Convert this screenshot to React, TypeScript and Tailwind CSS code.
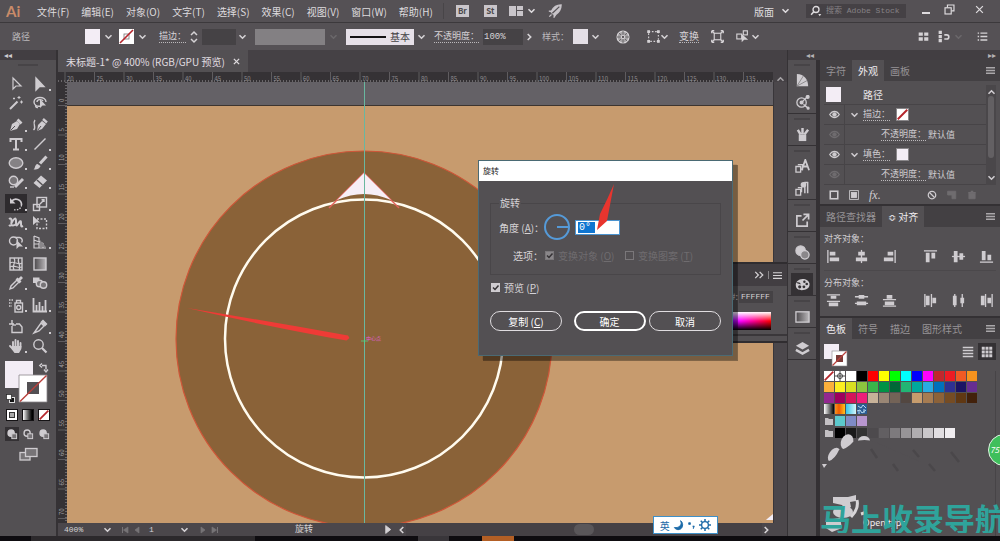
import type { ReactNode } from "react";

const menus = ["文件(F)", "编辑(E)", "对象(O)", "文字(T)", "选择(S)", "效果(C)", "视图(V)", "窗口(W)", "帮助(H)"];

const swatchRows = [
  ["none", "reg", "#ffffff", "#000000", "#ff0000", "#ffff00", "#00ff00", "#00ffff", "#0000ff", "#ff00ff", "#c1272d", "#ed1c24", "#f15a24", "#f7931e"],
  ["#fbb03b", "#fcee21", "#d9e021", "#8cc63f", "#39b54a", "#009245", "#006837", "#22b573", "#00a99d", "#29abe2", "#0071bc", "#2e3192", "#1b1464", "#662d91"],
  ["#93278f", "#9e005d", "#d4145a", "#ed1e79", "#c7b299", "#998675", "#736357", "#534741", "#c69c6d", "#a67c52", "#8c6239", "#754c24", "#603813", "#42210b"],
  ["linear-gradient(90deg,#fff,#000)", "linear-gradient(90deg,#f7931e,#f15a00 40%,#ffc21e)", "linear-gradient(90deg,#36c5e8,#d5f6fb)", "pattern"],
  ["folder", "#5cc8cc", "#7f8bc6", "#b896cf"],
  ["folder", "#000000", "#1a1a1a", "#333333", "#4d4a4d", "#625f62", "#7d7a7d", "#979497", "#b0adb0", "#cac7ca", "#e1dee1", "#f0edf0"],
];

function Icon({ size = 16, className = "", children }: { size?: number; className?: string; children: ReactNode }) {
  return (
    <svg width={size} height={size} viewBox="0 0 16 16" className={`shrink-0 ${className}`} fill="none" stroke="currentColor" strokeWidth="1.4" aria-hidden="true">
      {children}
    </svg>
  );
}

function Chevron({ className = "" }: { className?: string }) {
  return (
    <svg width="9" height="6" viewBox="0 0 9 6" className={`shrink-0 pointer-events-none ${className}`} fill="none" stroke="currentColor" strokeWidth="1.6" aria-hidden="true">
      <path d="M1.5 1.2 4.5 4.2 7.5 1.2" />
    </svg>
  );
}

function NoneSwatch({ size = 15 }: { size?: number }) {
  return (
    <svg width={size} height={size} viewBox="0 0 15 15" className="shrink-0" aria-hidden="true">
      <rect width="15" height="15" fill="#fff" />
      {size > 12 && <rect x="5" y="5" width="5" height="5" fill="none" stroke="#777" strokeWidth=".8" />}
      <path d="M1 14 14 1" stroke="#b5262c" strokeWidth={size > 12 ? 1.6 : 2.6} />
    </svg>
  );
}

const tools: { label: string; flyout?: boolean; active?: boolean; icon: ReactNode }[][] = [
  [
    { label: "选择工具", icon: <path d="M5 2v11l3-3h5z" strokeWidth="1.2" /> },
    { label: "直接选择工具", flyout: true, icon: <path d="M4 2v12l3.5-3.5H12z" fill="currentColor" /> },
    { label: "魔棒工具", icon: <><path d="M2 14 9.5 6.500" strokeWidth="2" /><path d="M11 1v3M9.500 2.500h3M13.500 5.500v3M12 7h3M6 2.500v2M5 3.500h2" strokeWidth="1" /></> },
    { label: "套索工具", icon: <><path d="M9 11c-4 1-7-1-7-4s3-4.500 6-4.500 6 1.500 6 4.500M4 10c-1 1 0 3 2 2.500" /><path d="M5 7c0-3 5-3 6-1" /><path d="M8 4v9l2.500-2.500H14z" fill="currentColor" stroke="none" /></> },
  ],
  [
    { label: "钢笔工具", flyout: true, icon: <><path d="M2 14 4 7l5-3 3 3-3 5z" fill="currentColor" stroke="none" /><path d="m9.500 2.500 4 4" strokeWidth="2.600" /><path d="M2.500 13.500 7 9" stroke="#535053" strokeWidth="1" /></> },
    { label: "曲率工具", icon: <><path d="m5 14 1-6 4-4 4 3-4 5z" fill="currentColor" stroke="none" /><path d="m11 2 4 3.500" strokeWidth="2.400" /><path d="M1.500 13C5 10 0 7 3 3" /><path d="M5.500 13.500 9 9" stroke="#535053" strokeWidth="1" /></> },
    { label: "文字工具", flyout: true, icon: <path d="M2.500 6V3h11v3M8 3v10.500M5 13.500h6" strokeWidth="2" /> },
    { label: "直线段工具", flyout: true, icon: <path d="M2.500 13.500 13.500 2.500" /> },
    { label: "椭圆工具", flyout: true, icon: <ellipse cx="8" cy="8" rx="6.800" ry="5.200" fill="#858285" /> },
    { label: "画笔工具", flyout: true, icon: <><path d="M14.500 1.500 8 8.500" strokeWidth="3" /><path d="M1.500 14.500c2-1 1-5 4-5.500L8.500 11c-1 3-4 3.500-7 3.500z" fill="currentColor" stroke="none" /></> },
    { label: "Shaper 工具", flyout: true, icon: <><circle cx="5.500" cy="6.500" r="4.200" fill="#777477" /><path d="m7 13 8-8" strokeWidth="3" /><path d="M2 13h4" /></> },
    { label: "橡皮擦工具", flyout: true, icon: <><path d="m1.500 9 7.500-7.500 6 5L7.500 14z" fill="currentColor" stroke="none" /><path d="m5 6 5.500 5" stroke="#535053" /></> },
  ],
  [
    { label: "旋转工具", flyout: true, active: true, icon: <><path d="M3.500 5.500A5.500 5.500 0 0 1 13.500 9" strokeWidth="1.700" /><path d="M13.500 9A5.500 5.500 0 0 1 6 13.500" strokeDasharray="1.500 1.300" /><path d="M2 2v5.500h5.500z" fill="currentColor" stroke="none" /></> },
    { label: "比例缩放工具", flyout: true, icon: <><rect x="1.500" y="8.500" width="6" height="6" /><rect x="5" y="1.500" width="9.500" height="9.500" /><path d="m8 8 4-4M9.500 3.800H12V6" /></> },
    { label: "宽度工具", flyout: true, icon: <path d="M1 4c3-2 3 3 2 5 3-6 5-7 5-3s0 6 2 3 3-4 3-1 0 4 2 3M1 11c2-2 5 1 7-2" strokeWidth="2" /> },
    { label: "自由变换工具", icon: <><rect x="5" y="4" width="9.500" height="9.500" strokeDasharray="2 1.500" /><path d="M1 1v9l3-2.500h4z" fill="currentColor" stroke="none" /></> },
    { label: "形状生成器工具", flyout: true, icon: <><circle cx="5.500" cy="7" r="4" /><path d="M7 3.500h4.500a3 3 0 0 1 2 5" /><path d="M8.500 6v9l2.500-2.500h4z" fill="currentColor" stroke="none" /></> },
    { label: "透视网格工具", flyout: true, icon: <><path d="M2 2v12h12M2 2l5 2v10M2 6l9 3.500v4.500M2 10h5" strokeWidth="1.200" /><path d="m8 6 6 7H8z" fill="#8a878a" stroke="none" /></> },
  ],
  [
    { label: "网格工具", icon: <><rect x="2" y="2" width="12" height="12" /><path d="M2 7c4-3 8 3 12 0M2 11c5-3 7 2 12 0M6 2c3 5-3 7 0 12M11 2c-3 4 3 7 0 12" strokeWidth="1.200" /></> },
    { label: "渐变工具", icon: <rect x="2" y="2" width="12" height="12" fill="url(#toolGrad)" /> },
    { label: "吸管工具", flyout: true, icon: <><path d="m2 14 1-3 6-6 2 2-6 6z" /><path d="m10 6 4-4M8.500 3.500l4 4" strokeWidth="2.800" /></> },
    { label: "混合工具", icon: <><rect x="1" y="2.500" width="6.500" height="5.500" fill="currentColor" stroke="none" /><circle cx="7.500" cy="8.500" r="3.200" fill="#777477" /><circle cx="11.500" cy="10" r="3.200" fill="#777477" /></> },
  ],
  [
    { label: "符号喷枪工具", flyout: true, icon: <><rect x="7" y="6" width="7.500" height="9" /><path d="M8.500 6V3.500h4V6" /><circle cx="10.700" cy="10.500" r="2" /><path d="M1 3h5M1 6h3M1 9h3" strokeDasharray="1.500 1" /></> },
    { label: "柱形图工具", flyout: true, icon: <path d="M1.500 1v13.500H15M4.500 14V8M7.500 14V5M10.500 14V9M13.500 14V3" strokeWidth="1.800" /> },
  ],
  [
    { label: "画板工具", icon: <><path d="M4 1v4M1 5h5" /><path d="M4 7v6.500h10V8l-2.500-3H8" /><path d="M4 6h4" /></> },
    { label: "切片工具", flyout: true, icon: <><path d="m2 14 7-10 3 3-5 5z" /><path d="m9.500 3 1.500-1.500L14.500 5 13 6.500z" fill="currentColor" /></> },
    { label: "抓手工具", flyout: true, icon: <><path d="M5 9V4M7.500 8V2M10 8V3M12.500 9V5M2 8l3 3" strokeWidth="1.900" strokeLinecap="round" /><path d="M4 8h9.400v3L11 15H6.500L3.500 11z" fill="currentColor" stroke="none" /></> },
    { label: "缩放工具", icon: <><circle cx="6.500" cy="6.500" r="4.700" /><path d="m10 10 4.500 4.500" strokeWidth="2.200" /></> },
  ],
];

function Toolbar() {
  return (
    <aside className="flex w-14 shrink-0 flex-col bg-[#535053] text-[#cfccd0]">
      <div className="h-[10px] bg-[#423e42] pl-1 text-[8px] leading-[10px]">◂◂</div>
      <div className="flex h-[14px] justify-center pt-1"><span className="h-[2px] w-5 bg-[#474447]" /></div>
      <div className="flex flex-col gap-[3px] px-1">
        {tools.map((group, i) => (
          <div key={i} className="grid grid-cols-2">
            {group.map((t) => (
              <button key={t.label} aria-label={t.label} className={`relative mx-auto flex h-[19px] w-[22px] items-center justify-center ${t.active ? "bg-[#2e2b2e]" : ""}`}>
                <Icon size={16}>{t.icon}</Icon>
                {t.flyout && <span className="absolute right-0 bottom-[2px] h-[2px] w-[2px] bg-[#cfccd0]" />}
              </button>
            ))}
          </div>
        ))}
      </div>
      <svg width="56" height="48" viewBox="0 0 56 48" className="mt-1 shrink-0" aria-hidden="true">
        <rect x="5" y="2" width="28" height="27" fill="#f3edf5" />
        <path d="M19 16h28v27H19z" fill="#fff" stroke="#8a878a" strokeWidth=".8" />
        <rect x="27" y="23" width="12" height="12" fill="#535053" />
        <path d="M20 42.500 46.500 16.500" stroke="#b9403c" strokeWidth="1.400" />
        <path d="M42 6.500h4v4M42 4.500 39.800 6.500l2.200 2M44 10.500l2 2.500 2-2.500" fill="none" stroke="#cfccd0" strokeWidth="1.400" />
        <rect x="9.500" y="38.500" width="5" height="5" fill="#111" stroke="#ddd" />
        <rect x="6.500" y="35.500" width="5" height="5" fill="#fff" stroke="#222" strokeWidth=".7" />
      </svg>
      <div className="mt-[2px] flex justify-center gap-1">
        <button aria-label="颜色" className="flex h-3 w-3 items-center justify-center border border-[#151315] bg-white"><span className="h-[6px] w-[6px] border border-[#333] bg-[#aaa]" /></button>
        <button aria-label="渐变" className="h-3 w-3 border border-[#151315] bg-linear-to-r from-white to-black" />
        <button aria-label="无" className="h-3 w-3 border border-[#151315]"><NoneSwatch size={10} /></button>
      </div>
      <div className="mt-[6px] flex justify-center gap-[2px]">
        {["正常绘图", "背面绘图", "内部绘图"].map((label, i) => (
          <button key={label} aria-label={label} className={`flex h-[14px] w-[14px] items-center justify-center ${i === 0 ? "bg-[#343134]" : ""}`}>
            <Icon size={11}><circle cx="6" cy="6" r="4.500" fill={i === 1 ? "none" : "currentColor"} strokeWidth="2" /><rect x="7" y="7" width="7" height="7" fill="#777477" /></Icon>
          </button>
        ))}
      </div>
      <button aria-label="更改屏幕模式" className="mx-auto mt-[6px]">
        <svg width="19" height="14" viewBox="0 0 19 14" fill="#777477" stroke="currentColor" strokeWidth="1.3"><rect x="1" y="5.500" width="10" height="7.500" /><rect x="6.500" y="1.500" width="11.500" height="8" /></svg>
      </button>
    </aside>
  );
}

function MenuBar() {
  return (
    <header className="flex h-[23px] shrink-0 items-center border-b border-[#3c393c] bg-[#555155] text-[10px] text-[#dedbde]">
      <span className="w-[29px] pl-[6px] font-[Lato] text-[15px] leading-none font-bold text-[#c98b69]">Ai</span>
      <nav className="flex gap-3 pl-2 whitespace-nowrap">
        {menus.map((m) => <button key={m}>{m}</button>)}
      </nav>
      <span className="ml-[10px] h-4 w-px bg-[#484548]" />
      <button className="ml-3 h-3 w-[13px] bg-[#c9c5ca] text-[8px] leading-3 font-bold text-[#4b484b]">Br</button>
      <button className="ml-[15px] h-3 w-[13px] bg-[#c9c5ca] text-[8px] leading-3 font-bold text-[#4b484b]">St</button>
      <button aria-label="排列文档" className="ml-3 flex items-center gap-1">
        <svg width="14" height="10" viewBox="0 0 14 10" fill="#c9c5ca"><path d="M0 0h7v10H0zM8 0h6v4H8zM8 5h6v5H8z" /></svg>
        <Chevron />
      </button>
      <button aria-label="GPU 性能" className="ml-3 text-[#c9c5ca]">
        <Icon size={14}><path d="M15 1C10 1 6 4 4 8H1l3 1 1 2 2 1v3l2-3c4-3 6-7 6-11z" fill="currentColor" /><path d="m4 12-2.500 2.500" /><path d="M5 10.500 13 3" stroke="#555155" /></Icon>
      </button>
      <div className="ml-auto flex items-center">
        <span className="relative flex items-center">
          <select aria-label="工作区" className="w-[38px] appearance-none bg-transparent text-[10px]"><option>版面</option></select>
          <Chevron className="absolute right-[2px]" />
        </span>
        <label className="ml-[14px] flex h-[14px] w-[100px] items-center bg-[#454145] pl-1">
          <Icon size={12}><circle cx="8" cy="6" r="4" strokeWidth="1.800" /><path d="M5 9 1.500 13" strokeWidth="2" /><path d="M11 12h4l-2 3z" fill="currentColor" stroke="none" /></Icon>
          <input aria-label="搜索 Adobe Stock" placeholder="搜索 Adobe Stock" className="ml-1 w-full min-w-0 bg-transparent font-['Liberation_Mono','Noto_Sans_CJK_SC',monospace] text-[8px] outline-none placeholder:text-[#858285]" />
        </label>
        <button aria-label="最小化" className="mt-1 ml-4 h-[2px] w-2 bg-[#dedbde]" />
        <button aria-label="还原" className="mb-1 ml-[14px]"><Icon size={11}><path d="M5 5V1.500h9.500V10H11" strokeWidth="1.700" /><rect x="1.500" y="5.500" width="9" height="9" strokeWidth="1.700" /></Icon></button>
        <button aria-label="关闭" className="mr-4 mb-1 ml-5"><Icon size={9}><path d="m2 2 12 12M14 2 2 14" strokeWidth="2.200" /></Icon></button>
      </div>
    </header>
  );
}

function ControlBar() {
  return (
    <section className="flex h-[27px] shrink-0 items-center bg-[#555155] text-[9px] whitespace-nowrap text-[#d5d2d5]">
      <span className="w-[85px] pl-3 text-[#bcb9bc]">路径</span>
      <button aria-label="填色" className="flex items-center gap-1"><span className="h-[15px] w-[15px] bg-[#f3edf5]" /><Chevron /></button>
      <button aria-label="描边颜色" className="ml-[6px] flex items-center gap-1"><NoneSwatch /><Chevron /></button>
      <label htmlFor="weight" className="ml-3 border-b border-dotted border-[#bbb8bb] leading-3">描边：</label>
      <svg width="8" height="14" viewBox="0 0 8 14" className="mr-1 ml-1 shrink-0" fill="none" stroke="currentColor" strokeWidth="1.5"><path d="M1 5 4 2l3 3M1 9l3 3 3-3" /></svg>
      <input id="weight" className="h-4 w-[34px] bg-[#454245]" />
      <Chevron className="ml-[2px]" />
      <span className="ml-2 h-4 w-[70px] bg-[#838083]" />
      <Chevron className="ml-1 text-[#6b686b]" />
      <button className="ml-2 flex h-4 w-[68px] items-center bg-[#e6e0e8] pl-1 text-[10px] text-[#444144]"><span className="mr-1 h-[2px] w-9 bg-[#151315]" />基本</button>
      <Chevron className="ml-[3px]" />
      <label htmlFor="opacity" className="ml-2 border-b border-dotted border-[#bbb8bb] leading-3">不透明度：</label>
      <input id="opacity" defaultValue="100%" className="ml-1 h-4 w-10 bg-[#454245] px-px font-['Liberation_Mono',monospace] text-[9px]" />
      <Chevron className="ml-[2px] -rotate-90" />
      <span className="ml-2 text-[#bcb9bc]">样式：</span>
      <button aria-label="图形样式" className="ml-1 flex items-center gap-[3px]"><span className="h-[15px] w-[15px] bg-[#e4dfe6]" /><Chevron /></button>
      <button aria-label="重新着色图稿" className="ml-4">
        <Icon size={14}><circle cx="8" cy="8" r="6.800" fill="#a5a2a5" /><path d="M8 1v14M1 8h14M3 3l10 10M13 3 3 13" stroke="#656265" strokeWidth="1" /><circle cx="8" cy="8" r="2" fill="#555155" /></Icon>
      </button>
      <button aria-label="对齐" className="ml-[17px] flex items-center"><Icon size={13}><rect x="2" y="2" width="12" height="12" strokeDasharray="2 2" /><path d="M1 1h2v2H1zM13 1h2v2h-2zM1 13h2v2H1zM13 13h2v2h-2z" fill="currentColor" /></Icon><Chevron /></button>
      <button className="ml-[10px] border-b border-dotted border-[#bbb8bb] text-[10px] leading-3">变换</button>
      <button aria-label="隔离选中的对象" className="ml-3"><Icon size={13}><rect x="4" y="4" width="8" height="8" /><path d="M1 1l3 3M15 1l-3 3M1 15l3-3M15 15l-3-3" /><path d="M1 1h3M1 1v3M15 1h-3M15 1v3M1 15h3M1 15v-3M15 15h-3M15 15v-3" strokeWidth="1.800" /></Icon></button>
      <button aria-label="选择类似的对象" className="ml-3 flex items-center gap-[2px]"><Icon size={13}><rect x="1" y="5" width="6" height="6" /><rect x="9" y="1" width="5" height="5" /><path d="M7 5v10l3-3h5z" fill="currentColor" stroke="none" /></Icon><Chevron /></button>
      <div className="mr-3 ml-auto flex items-center">
        <Icon size={11}><path d="M1 2h6v5H1zM9 2h6v5H9zM1 9h6v5H1zM9 9h6v5H9z" fill="currentColor" stroke="none" /></Icon>
        <Icon size={13} className="ml-2"><path d="M2 1h4v4H2zM2 6h4v4H2zM2 11h4v4H2z" fill="currentColor" stroke="none" /><path d="M9 6h3a2 2 0 0 1 0 5H9" strokeWidth="2" /></Icon>
        <Chevron className="ml-1 text-[#6b686b]" />
        <Icon size={11} className="ml-[14px]"><path d="M1 3h2M5 3h10M1 8h2M5 8h10M1 13h2M5 13h10" strokeWidth="2" /></Icon>
      </div>
    </section>
  );
}

const ticks = Array.from({ length: 24 }, (_, i) => i);

function TopRuler() {
  return (
    <svg className="block h-[10px] min-w-0 flex-1" aria-hidden="true">
      <defs>
        <pattern id="minorX" width="3" height="10" patternUnits="userSpaceOnUse"><path d="M.5 8v2" stroke="#6a676a" /></pattern>
      </defs>
      <rect width="100%" height="10" fill="#353235" />
      <rect width="100%" height="10" fill="url(#minorX)" />
      {ticks.map((i) => (
        <g key={i}>
          <path d={`M${7 + i * 29.5} 0v10`} stroke="#5f5c5f" />
          <text x={9 + i * 29.5} y="9" fontSize="6" fill="#8f8c8f">{20 + i * 5}</text>
        </g>
      ))}
    </svg>
  );
}

function LeftRuler() {
  return (
    <svg className="block h-full w-[9px] shrink-0" aria-hidden="true">
      <defs>
        <pattern id="minorY" width="9" height="3" patternUnits="userSpaceOnUse"><path d="M7 .5h2" stroke="#6a676a" /></pattern>
      </defs>
      <rect width="9" height="100%" fill="#353235" />
      <rect width="9" height="100%" fill="url(#minorY)" />
      {ticks.slice(0, 15).map((i) => (
        <g key={i}>
          <path d={`M0 ${23.5 + i * 29.5}h9`} stroke="#5f5c5f" />
          <text transform={`translate(6 ${20 + i * 29.5}) rotate(-90)`} fontSize="6" fill="#a5a2a5">{i * 5}</text>
        </g>
      ))}
    </svg>
  );
}

function Artwork() {
  return (
    <svg className="block h-full min-w-0 flex-1" aria-hidden="true">
      <rect width="100%" height="100%" fill="#646166" />
      <rect y="23" width="100%" height="100%" fill="#c79b6e" />
      <path d="M0 23.500h3000" stroke="#3d3530" />
      <circle cx="297" cy="257" r="188" fill="#8a6238" stroke="#cf5638" strokeWidth="1.200" />
      <circle cx="297" cy="256.500" r="139" fill="none" stroke="#fffbef" strokeWidth="2.500" />
      <path d="M262 126 297 91l35 35" fill="none" stroke="#e2605a" strokeWidth="1.400" />
      <path d="M297 91 324 118Q297 106 270 118z" fill="#f6eef6" />
      <path d="M297.500 0v600" stroke="#69b7a0" />
      <path d="M120 226Q200 239 281 253.500l1.500 2.500-3 2.500L262 255.500Q190 242 120 226z" fill="#ef3b36" />
      <path d="M294 259h7M297.500 256v6" stroke="#4fd08c" strokeWidth=".8" />
      <text x="299" y="258" fontSize="5" fill="#e25fd6">中心点</text>
      <path d="m700 437 6-5v6h-7z" fill="#f3edf5" />
    </svg>
  );
}

function Check({ id, checked, disabled }: { id: string; checked?: boolean; disabled?: boolean }) {
  return (
    <span className="relative flex shrink-0">
      <input
        id={id}
        type="checkbox"
        defaultChecked={checked}
        disabled={disabled}
        className={`h-[9px] w-[9px] appearance-none border ${disabled ? "border-[#7a777a] checked:bg-[#8a878a]" : "border-[#cfccd0] checked:bg-[#cfccd0]"}`}
      />
      {checked && <svg width="9" height="9" viewBox="0 0 9 9" className="pointer-events-none absolute" fill="none" stroke="#353235" strokeWidth="1.5"><path d="m2 4.500 2 2 3.500-4" /></svg>}
    </span>
  );
}

function RotateDialog() {
  return (
    <div role="dialog" aria-label="旋转" className="absolute top-[110px] left-[420px] w-[255px] border border-[#4a6a74] bg-[#535053] text-[10px] text-[#d5d2d5] shadow-[4px_4px_0_0_rgba(0,0,0,0.08),5px_5px_0_0_rgba(0,0,0,0.35)]">
      <h2 className="h-5 bg-white pl-1 text-[8px] leading-5 text-[#222]">旋转</h2>
      <div className="px-[11px] pt-4 pb-6">
        <fieldset className="h-[78px] border border-[#494649] px-2">
          <legend className="bg-[#535053] px-px leading-3">旋转</legend>
          <div className="mt-1 flex items-center">
            <label htmlFor="angle" className="w-11 whitespace-nowrap">角度 (<u>A</u>)：</label>
            <svg width="28" height="28" viewBox="0 0 28 28" fill="none" stroke="#559ad8" strokeWidth="2" aria-hidden="true"><circle cx="14" cy="14" r="12" /><path d="M14 14h12" /></svg>
            <span className="ml-1 flex h-[15px] w-[45px] border border-[#4c94cf] bg-white px-[2px] py-px">
              <input id="angle" defaultValue="0°" className="h-[11px] w-[17px] bg-[#0f75d0] px-px font-['Liberation_Mono',monospace] text-[10px] text-white outline-none" />
            </span>
          </div>
          <div className="mt-[7px] flex items-center whitespace-nowrap">
            <span className="ml-[14px] w-8">选项：</span>
            <Check id="objects" checked disabled />
            <label htmlFor="objects" className="ml-1 w-[67px] text-[#6f6c6f]">变换对象 (<u>O</u>)</label>
            <Check id="patterns" disabled />
            <label htmlFor="patterns" className="ml-1 text-[#6f6c6f]">变换图案 (<u>T</u>)</label>
          </div>
        </fieldset>
        <div className="mt-[5px] ml-px flex items-center">
          <Check id="preview" checked />
          <label htmlFor="preview" className="ml-1">预览 (<u>P</u>)</label>
        </div>
        <div className="mt-4 flex justify-between">
          <button className="h-5 w-[72px] rounded-full border border-[#e0dde0] text-white">复制 (<u>C</u>)</button>
          <button className="ml-2 h-5 w-[72px] rounded-full border-2 border-white text-white">确定</button>
          <button className="h-5 w-[72px] rounded-full border border-[#e0dde0] text-white">取消</button>
        </div>
      </div>
      <svg width="22" height="52" viewBox="0 0 22 52" className="pointer-events-none absolute top-[22px] left-[116px]" fill="#e8352e" aria-hidden="true">
        <path d="M19 1Q15 22 12 38L2 47 5 31Q13 15 19 1z" />
      </svg>
    </div>
  );
}

function ColorPanel() {
  return (
    <div className="absolute top-[212px] right-0 left-[460px] border-y-2 border-[#302d30] bg-[#535053] text-[#d5d2d5]">
      <div className="flex h-[22px] items-center justify-end gap-1 bg-[#423e42] pr-[5px]">
        <Icon size={10}><path d="m2 3 5 5-5 5M9 3l5 5-5 5" strokeWidth="2" /></Icon>
        <span className="h-2 w-px bg-[#8a878a]" />
        <Icon size={9}><path d="M0 3h16M0 8h16M0 13h16" strokeWidth="2" /></Icon>
      </div>
      <div className="flex h-[22px] items-center justify-end pr-[14px]">
        <label htmlFor="hex" className="mr-px text-[9px]">#:</label>
        <input id="hex" defaultValue="FFFFFF" className="h-3 w-[34px] bg-[#454245] px-[2px] font-['Liberation_Mono',monospace] text-[8px]" />
      </div>
      <div className="mt-1 mr-4 h-[18px] bg-[linear-gradient(to_bottom,#fff,transparent_50%,#000),linear-gradient(90deg,#00f_80%,#f0f_88%,#f00)]" />
      <div className="mt-1 h-[7px] border-t-2 border-[#3a373a]" />
    </div>
  );
}

function StatusBar() {
  return (
    <footer className="flex h-[13px] shrink-0 items-center bg-[#4b474b] pl-[6px] font-['Liberation_Mono','Noto_Sans_CJK_SC',monospace] text-[8px] text-[#d5d2d5]">
      <span className="relative flex items-center">
        <select aria-label="缩放比例" className="h-[13px] w-12 appearance-none"><option>400%</option></select>
        <Chevron className="absolute right-0" />
      </span>
      <button aria-label="首项" className="ml-[9px] text-[#777477]"><Icon size={8}><path d="M3 2v12" strokeWidth="2" /><path d="M14 2v12L5 8z" fill="currentColor" /></Icon></button>
      <button aria-label="上一项" className="ml-1 text-[#777477]"><Icon size={8}><path d="M12 2v12L4 8z" fill="currentColor" /></Icon></button>
      <span className="relative ml-2 flex items-center">
        <select aria-label="画板导航" className="h-[13px] w-10 appearance-none"><option>1</option></select>
        <Chevron className="absolute right-0" />
      </span>
      <button aria-label="下一项" className="ml-[10px] text-[#777477]"><Icon size={8}><path d="M4 2v12l8-6z" fill="currentColor" /></Icon></button>
      <button aria-label="末项" className="ml-1 text-[#777477]"><Icon size={8}><path d="M2 2v12l9-6z" fill="currentColor" /><path d="M13 2v12" strokeWidth="2" /></Icon></button>
      <span className="ml-[76px] text-[9px] leading-3">旋转</span>
      <Icon size={9} className="ml-[71px]"><path d="M3 1v14l9-7z" fill="currentColor" /></Icon>
      <Chevron className="ml-1 rotate-90" />
      <div className="flex h-full flex-1 items-center justify-center bg-[#454145]"><span className="h-[11px] w-5 rounded-full bg-[#5a575a]" /></div>
      <Chevron className="mr-4 -rotate-90" />
    </footer>
  );
}

function Document() {
  return (
    <main className="relative ml-[2px] flex min-w-0 flex-1 flex-col bg-[#454145]">
      <div className="flex h-[22px] shrink-0">
        <div className="flex items-center bg-[#535053] px-2 text-[10px] whitespace-nowrap text-[#e0dde0]">
          未标题-1* @ 400% (RGB/GPU 预览)
          <button aria-label="关闭文档" className="ml-2"><Icon size={7}><path d="m2 2 12 12M14 2 2 14" strokeWidth="3" /></Icon></button>
        </div>
      </div>
      <div className="flex">
        <TopRuler />
        <div className="flex w-[14px] justify-center text-[#a5a2a5]"><Chevron className="mt-1 rotate-180" /></div>
      </div>
      <div className="flex min-h-0 flex-1">
        <LeftRuler />
        <Artwork />
        <div className="w-[14px] shrink-0 border-l border-[#39363a] bg-[#4b474b]" />
      </div>
      <StatusBar />
      <ColorPanel />
      <RotateDialog />
      <div className="absolute right-[69px] bottom-[2px] flex h-[18px] w-[65px] items-center justify-around border border-[#3e90c8] bg-white px-1 text-[10px] text-[#1c6aa8]">
        <span>英</span>
        <Icon size={11}><path d="M11 1c3 6-2 11-9 10 3 5 12 4 12-4 0-2-1-5-3-6z" fill="currentColor" /></Icon>
        <Icon size={9}><path d="M3 3h3v3H3zM10 9h3l-2 5" fill="currentColor" /></Icon>
        <Icon size={12}><circle cx="8" cy="8" r="4.500" strokeWidth="1.800" /><path d="M8 0v3M8 13v3M0 8h3M13 8h3M2.300 2.300l2 2M11.700 11.700l2 2M2.300 13.700l2-2M11.700 4.300l2-2" strokeWidth="2" /></Icon>
      </div>
    </main>
  );
}

const dock: { label: string; active?: boolean; icon: ReactNode }[][] = [
  [
    { label: "颜色参考", icon: <><path d="M2 1c8 0 12 6 12 13H2z" fill="currentColor" stroke="none" /><path d="M2 14 9 3M2 14l11-6" stroke="#8a878a" strokeWidth="1" /></> },
    { label: "资源导出", icon: <><circle cx="7" cy="8" r="5" /><circle cx="7" cy="8" r="1.500" fill="currentColor" /><path d="m8 7 5-5M9 10l5 4" /><circle cx="13.500" cy="2" r="1.500" fill="currentColor" /><circle cx="14" cy="14" r="1" fill="currentColor" /></> },
  ],
  [{ label: "画笔", icon: <><path d="M4 8h8v7H4z" fill="currentColor" stroke="none" /><path d="M6 8 3 3M8 8V1M10 8l4-5" strokeWidth="2.600" /></> }],
  [
    { label: "字符样式", icon: <><path d="M1 8h5v6H1zM3 6h5v6" /><path d="M7 12 11 1l4 11M8.500 8h5" strokeWidth="1.900" /></> },
    { label: "段落样式", icon: <><path d="M1 9h5v6H1zM3 7h4v5" /><path d="M10.500 1v12M13.500 1v12M14 1.500h-4" strokeWidth="1.600" /><circle cx="9" cy="4" r="3" fill="currentColor" stroke="none" /></> },
  ],
  [{ label: "导出", icon: <path d="M7 3H2v11h11V9M9 1.500h5.500V7M14 2 8 8" strokeWidth="1.800" /> }],
  [{ label: "透明度", icon: <><circle cx="6" cy="6" r="5" fill="currentColor" /><circle cx="10.500" cy="10.500" r="4.500" fill="#8a878a" /></> }],
  [{ label: "颜色", active: true, icon: <><path d="M8 2C4 2 0 5 1 10c1 4 4 3 6 4 5 0 9-2 8.500-7C15 4 12 2 8 2z" fill="currentColor" stroke="none" /><g fill="#343134" stroke="none"><circle cx="5" cy="10.500" r="1.700" /><circle cx="9.500" cy="10.500" r="1.500" /><circle cx="12.500" cy="7.500" r="1.400" /><circle cx="10" cy="5" r="1.300" /><path d="M1 6c3-1 5 0 5 2z" /></g></> }],
  [{ label: "渐变", icon: <rect x="1" y="3" width="14" height="11" fill="url(#toolGrad)" /> }],
  [{ label: "图层", icon: <><path d="m8 1 7 4-7 4-7-4z" fill="currentColor" stroke="none" /><path d="m1 9.500 7 4 7-4" strokeWidth="2.600" /></> }],
];

function Dock() {
  return (
    <aside className="flex w-7 shrink-0 flex-col bg-[#535053] text-[#cfccd0]">
      {dock.map((section, i) => (
        <div key={i} className="flex flex-col items-center border-b border-[#343134]">
          <span className="mt-1 mb-[3px] h-[2px] w-4 bg-[#474447]" />
          {section.map((d) => (
            <button key={d.label} aria-label={d.label} className={`flex h-[22px] w-[22px] items-center justify-center ${d.active ? "bg-[#343134]" : ""}`}><Icon size={15}>{d.icon}</Icon></button>
          ))}
        </div>
      ))}
    </aside>
  );
}

function Tabs({ names, active }: { names: string[]; active: string }) {
  return (
    <div role="tablist" className="flex h-[21px] shrink-0 items-stretch bg-[#434043] text-[10px] whitespace-nowrap">
      {names.map((n) => (
        <button key={n} role="tab" aria-selected={n === active} className={`px-[6px] ${n === active ? "bg-[#535053] text-[#f0edf0]" : "text-[#969396]"}`}>{n}</button>
      ))}
      <button aria-label="面板菜单" className="mr-[5px] ml-auto text-[#aaa7aa]"><Icon size={9}><path d="M0 3h16M0 8h16M0 13h16" strokeWidth="2.500" /></Icon></button>
    </div>
  );
}

function Eye({ dim }: { dim?: boolean }) {
  return (
    <span className={`flex w-5 shrink-0 justify-center ${dim ? "text-[#6f6c6f]" : ""}`}>
      <Icon size={11}><path d="M1 8c4-6 10-6 14 0-4 6-10 6-14 0z" strokeWidth="1.800" /><circle cx="8" cy="8" r="2.600" fill="currentColor" /></Icon>
    </span>
  );
}

function AppearanceRow({ label, dim, swatch, value }: { label: string; dim?: boolean; swatch?: ReactNode; value?: string }) {
  return (
    <div className="flex h-5 items-center border-b border-[#474447]">
      <Eye dim={dim} />
      <span className="flex h-full w-[19px] shrink-0 items-center justify-center border-l border-[#474447]">{!value && <Chevron />}</span>
      <span className={`border-b border-dotted border-[#bbb8bb] leading-3 ${value ? "ml-[18px]" : ""}`}>{label}</span>
      {value && <span className="ml-[2px]">{value}</span>}
      {swatch && <span className="ml-[6px] border border-[#8a878a]">{swatch}</span>}
    </div>
  );
}

function Appearance() {
  return (
    <section className="flex flex-col border-b-2 border-[#343134]">
      <Tabs names={["字符", "外观", "画板"]} active="外观" />
      <div className="mt-1 mr-1 ml-1 flex text-[9px] whitespace-nowrap">
        <div className="min-w-0 flex-1">
          <div className="flex h-5 items-center border-b border-[#474447] pl-[2px] text-[10px] text-[#e6e3e6]"><span className="mr-[22px] h-[15px] w-[15px] bg-[#f3edf5]" />路径</div>
          <AppearanceRow label="描边：" swatch={<NoneSwatch size={11} />} />
          <AppearanceRow label="不透明度：" dim value="默认值" />
          <AppearanceRow label="填色：" swatch={<span className="block h-[11px] w-[11px] bg-[#f3edf5]" />} />
          <AppearanceRow label="不透明度：" dim value="默认值" />
        </div>
        <div className="flex w-[10px] flex-col items-center justify-between bg-[#4a474a] py-1"><Chevron className="rotate-180" /><span className="my-px w-[6px] flex-1 rounded-full bg-[#636063]" /><Chevron className="mt-4" /></div>
      </div>
      <div className="flex h-[19px] items-center gap-[10px] pl-[9px]">
        <Icon size={10}><rect x="2" y="2" width="12" height="12" strokeWidth="2.500" /></Icon>
        <Icon size={10}><rect x="1" y="1" width="14" height="14" /><rect x="4" y="4" width="8" height="8" fill="currentColor" /></Icon>
        <span className="font-['Liberation_Serif',serif] text-[12px] leading-3 italic">fx.</span>
        <Icon size={10} className="ml-9"><circle cx="8" cy="8" r="6" strokeWidth="2" /><path d="m4 4 8 8" strokeWidth="2" /></Icon>
        <Icon size={10} className="text-[#6f6c6f]"><path d="M1 2h13v12H8V8H1z" fill="currentColor" /></Icon>
        <Icon size={10} className="text-[#6f6c6f]"><path d="M2 4h12M6 2h4" strokeWidth="2" /><path d="M3 5h10v9H3z" fill="currentColor" /></Icon>
      </div>
    </section>
  );
}

const alignTop: [string, ReactNode][] = [
  ["水平左对齐", <><path d="M2 1v14" /><path d="M4 3h6v4H4zM4 9h10v4H4z" fill="currentColor" stroke="none" /></>],
  ["水平居中对齐", <><path d="M8 1v14" /><path d="M4.500 3h7v4h-7zM2 9h12v4H2z" fill="currentColor" stroke="none" /></>],
  ["水平右对齐", <><path d="M14 1v14" /><path d="M6 3h6v4H6zM2 9h10v4H2z" fill="currentColor" stroke="none" /></>],
  ["垂直顶对齐", <><path d="M1 2h14" /><path d="M3 4h4v10H3zM9 4h4v6H9z" fill="currentColor" stroke="none" /></>],
  ["垂直居中对齐", <><path d="M1 8h14" /><path d="M3 2h4v12H3zM9 4.500h4v7H9z" fill="currentColor" stroke="none" /></>],
  ["垂直底对齐", <><path d="M1 14h14" /><path d="M3 2h4v10H3zM9 6h4v6H9z" fill="currentColor" stroke="none" /></>],
];
const alignBottom: [string, ReactNode][] = [
  ["垂直顶分布", <><path d="M1 2h14M1 9h14" /><path d="M5 3h6v3H5zM3 10h10v4H3z" fill="currentColor" stroke="none" /></>],
  ["垂直居中分布", <><path d="M1 4h14M1 11h14" /><path d="M5 2h6v4H5zM3 9h10v4H3z" fill="currentColor" stroke="none" /></>],
  ["垂直底分布", <><path d="M1 7h14M1 14h14" /><path d="M5 2h6v4H5zM3 9h10v4H3z" fill="currentColor" stroke="none" /></>],
  ["水平左分布", <><path d="M2 1v14M9 1v14" /><path d="M3 3h4v10H3zM10 5h4v6h-4z" fill="currentColor" stroke="none" /></>],
  ["水平居中分布", <><path d="M4 1v14M12 1v14" /><path d="M2 3h4v10H2zM10 5h4v6h-4z" fill="currentColor" stroke="none" /></>],
  ["水平右分布", <><path d="M7 1v14M14 1v14" /><path d="M2 3h4v10H2zM9 5h4v6H9z" fill="currentColor" stroke="none" /></>],
];

function AlignRow({ items }: { items: [string, ReactNode][] }) {
  return (
    <div className="flex justify-between px-[2px]">
      {items.map(([label, icon], i) => (
        <button key={label} aria-label={label} className={i === 3 ? "ml-3" : ""}><Icon size={15}>{icon}</Icon></button>
      ))}
    </div>
  );
}

function Align() {
  return (
    <section className="flex flex-col border-b-2 border-[#343134]">
      <Tabs names={["路径查找器", "≎ 对齐"]} active="≎ 对齐" />
      <div className="px-1 text-[9px]">
        <p className="mt-1 leading-4">对齐对象：</p>
        <div className="mt-[2px]"><AlignRow items={alignTop} /></div>
        <p className="mt-[6px] border-t border-[#4b484b] pt-1 leading-4">分布对象：</p>
        <div className="mt-[2px] mb-2"><AlignRow items={alignBottom} /></div>
      </div>
    </section>
  );
}

function Swatch({ value }: { value: string }) {
  if (value === "none") return <NoneSwatch size={10} />;
  if (value === "reg")
    return <Icon size={10} className="bg-white text-[#333]"><circle cx="8" cy="8" r="4" /><path d="M8 0v16M0 8h16" /></Icon>;
  if (value === "folder")
    return <svg width="10" height="10" viewBox="0 0 10 10" fill="#c4c1c4"><path d="M1 2h3l1 1h4v6H1z" /></svg>;
  if (value === "pattern")
    return <svg width="10" height="10" viewBox="0 0 10 10"><rect width="10" height="10" fill="#2b5d94" /><path d="M1 2l3 2 2-3 3 3M0 7l3-1 2 3 4-3M2 10V6M7 5v4" fill="none" stroke="#b7d9ef" /></svg>;
  return <span className="h-[10px] w-[10px]" style={{ background: value }} />;
}

function Swatches() {
  return (
    <section className="relative flex min-h-0 flex-1 flex-col">
      <Tabs names={["色板", "符号", "描边", "图形样式"]} active="色板" />
      <div className="flex items-start justify-between pt-1 pl-1">
        <svg width="24" height="24" viewBox="0 0 24 24" aria-hidden="true">
          <rect y="1" width="15" height="15" fill="#f3edf5" />
          <rect x="8" y="8" width="15" height="15" fill="#fff" stroke="#8a878a" strokeWidth=".6" />
          <rect x="12" y="12" width="7" height="7" fill="#7a3b38" />
          <path d="m8.500 22.500 14-14" stroke="#b9403c" strokeWidth="1.300" />
        </svg>
        <div className="mr-1 flex items-center">
          <button aria-label="列表视图" className="flex h-[17px] w-[18px] items-center justify-center"><Icon size={12}><path d="M1 2h14M1 6h14M1 10h14M1 14h14" strokeWidth="2" /></Icon></button>
          <button aria-label="缩览图视图" className="ml-px flex h-[17px] w-[18px] items-center justify-center bg-[#343134]"><Icon size={12}><path d="M1 1h4v4H1zM6 1h4v4H6zM11 1h4v4h-4zM1 6h4v4H1zM6 6h4v4H6zM11 6h4v4h-4zM1 11h4v4H1zM6 11h4v4H6zM11 11h4v4h-4z" fill="currentColor" stroke="none" /></Icon></button>
        </div>
      </div>
      <div className="mt-1 mr-1 flex flex-1 flex-col gap-px border-r border-[#474447] pl-1">
        {swatchRows.map((row, i) => (
          <div key={i} className={`flex gap-px ${i > 3 ? "mt-px" : ""}`}>
            {row.map((c, j) => <Swatch key={j} value={c} />)}
          </div>
        ))}
      </div>
      <svg width="170" height="105" viewBox="0 0 170 105" className="absolute top-[114px] left-px" aria-hidden="true">
        <g fill="#cfccd0">
          <ellipse cx="26" cy="10" rx="6" ry="8" transform="rotate(25 26 10)" />
          <ellipse cx="13" cy="23" rx="5" ry="8" transform="rotate(35 13 23)" />
          <ellipse cx="43" cy="9" rx="6" ry="5" />
          <path d="M1 32h5l-3 4zM12 65h15l8-2v6l-6 1 1 5-5 4-4-6-9-2z" />
          <ellipse cx="22" cy="80" rx="10" ry="6" />
          <path d="M5 88l14-2 2 10-10 4-6-4z" />
        </g>
        <path d="M5 36 8 29Q14 27 18 18 26 17 32 10 44 6 54 10L100 30v30H5z" fill="#535053" />
        <path d="m50 17 6 9M92 18l6 7M72 32l5 7M108 32l6 7M130 20l8 10" stroke="#4a474a" strokeWidth="2.500" />
        <path d="M36 68q2 9-6 17M40 82l6-2" fill="none" stroke="#d8d5d8" strokeWidth="3" />
      </svg>
      <span className="absolute bottom-[7px] left-[43px] text-[9px] leading-3 text-[#f0edf0]">Open type</span>
      <span className="absolute bottom-[3px] left-0 w-full overflow-hidden text-[31px] leading-[31px] font-bold whitespace-nowrap text-[#2fa39b]">马上收录导航</span>
      <span className="absolute top-[116px] right-[-20px] flex h-8 w-8 items-center rounded-full border border-[#dff3e2] bg-[#3fbf5c] pl-px text-[8px] text-white italic">75</span>
    </section>
  );
}

export default function App() {
  return (
    <div className="flex h-screen w-full flex-col overflow-hidden bg-[#353235] font-['Noto_Sans_CJK_SC',sans-serif] select-none">
      <svg width="0" height="0" className="absolute" aria-hidden="true">
        <linearGradient id="toolGrad"><stop stopColor="#4a474a" /><stop offset="1" stopColor="#bbb8bb" /></linearGradient>
      </svg>
      <MenuBar />
      <ControlBar />
      <div className="flex min-h-0 flex-1">
        <Toolbar />
        <Document />
        <div className="ml-px flex w-[212px] shrink-0 flex-col bg-[#343134]">
          <div className="flex h-[10px] justify-between bg-[#423e42] pr-1 pl-[18px] text-[8px] leading-[10px] text-[#b5b2b5]"><span>◂◂</span><span>▸▸</span></div>
          <div className="flex min-h-0 flex-1 gap-1">
            <Dock />
            <div className="flex min-w-0 flex-1 flex-col bg-[#535053] text-[#cfccd0]">
              <Appearance />
              <Align />
              <Swatches />
            </div>
          </div>
        </div>
      </div>
      <div className="flex h-[5px] shrink-0 bg-[#0e0c10]">
        <span className="ml-[31px] h-full w-[224px] bg-[#2c292c]" />
        <span className="ml-[163px] h-full w-[31px] bg-[#39363a]" />
        <span className="ml-[33px] h-full w-8 bg-[#b35f25]" />
      </div>
    </div>
  );
}
